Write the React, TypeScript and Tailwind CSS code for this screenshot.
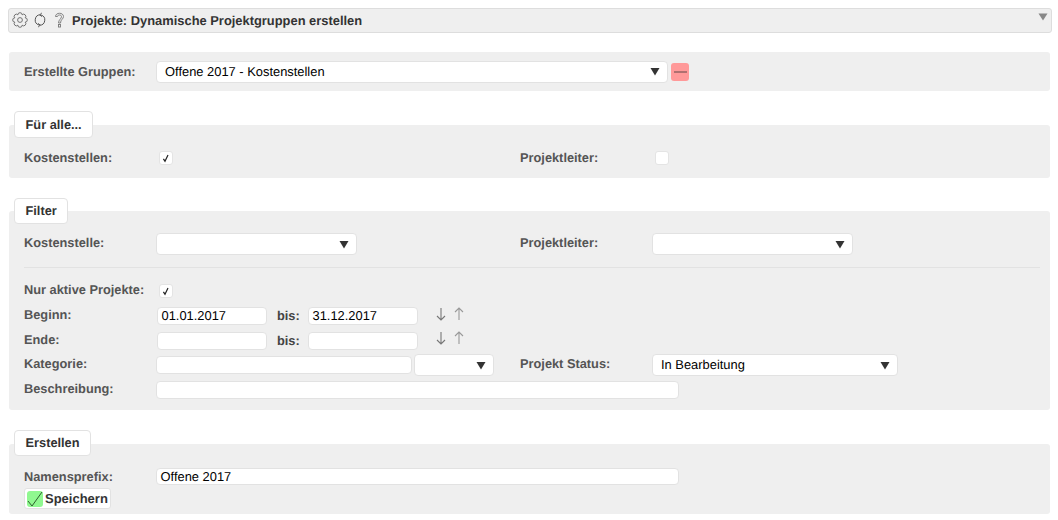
import React from "react";

const FONT = "[font-family:'Liberation_Sans',Arial,sans-serif] [text-rendering:geometricPrecision]";

function gearPath() {
  const cx = 12;
  const cy = 12;
  const r = 8.4;
  const n = 8;
  let d = "";
  for (let i = 0; i < n; i++) {
    const a = ((i * 360) / n + 22.5 - 90) * (Math.PI / 180);
    const x = (cx + r * Math.cos(a)).toFixed(2);
    const y = (cy + r * Math.sin(a)).toFixed(2);
    d += i === 0 ? `M${x} ${y}` : ` A2.4 2.4 0 0 1 ${x} ${y}`;
  }
  const a0 = (22.5 - 90) * (Math.PI / 180);
  d += ` A2.4 2.4 0 0 1 ${(cx + r * Math.cos(a0)).toFixed(2)} ${(cy + r * Math.sin(a0)).toFixed(2)}Z`;
  return d;
}

function Tri({ className = "" }: { className?: string }) {
  return (
    <svg width="10" height="9" viewBox="0 0 10 9" className={className}>
      <path d="M0.5 1 H9.5 L5 8.5 Z" fill="#333" />
    </svg>
  );
}

function Select({ w, value, h = "h-[22px]" }: { w: string; value?: string; h?: string }) {
  return (
    <div className={`${w} ${h} shrink-0 flex items-center justify-between bg-white border border-[#e2e2e2] rounded-[4px] pl-[8px] pr-[7px] text-[12.9px] text-black`}>
      <span>{value}</span>
      <Tri />
    </div>
  );
}

function Input({ w, value, h = "h-[18px]" }: { w: string; value?: string; h?: string }) {
  return (
    <div className={`${w} ${h} shrink-0 flex items-center bg-white border border-[#e2e2e2] rounded-[4px] pl-[3.5px] text-[12.9px] text-black leading-none`}>
      {value}
    </div>
  );
}

function Check({ checked }: { checked?: boolean }) {
  return (
    <div className="w-[14px] h-[14px] ml-[3px] shrink-0 bg-white border border-[#e4e4e4] rounded-[3px] flex items-center justify-center">
      {checked && (
        <svg width="10" height="10" viewBox="0 0 10 10">
          <path d="M2.4 5.8 L4 8.2 L7 2" fill="none" stroke="#222" strokeWidth="1.2" />
        </svg>
      )}
    </div>
  );
}

function Label({ children, w = "w-[132px]", up = true }: { children: React.ReactNode; w?: string; up?: boolean }) {
  return (
    <div className={`${w} shrink-0 text-[12.8px] font-bold text-[#555]`}>
      <span className={up ? "relative -top-[1px]" : ""}>{children}</span>
    </div>
  );
}

function Tab({ children, w, h, mb }: { children: React.ReactNode; w: string; h: string; mb: string }) {
  return (
    <div className={`${w} ${h} ${mb} relative z-10 ml-[6px] flex items-center pl-[10.5px] bg-white border border-[#e2e2e2] rounded-[4px] text-[12.8px] font-bold text-[#333]`}>
      {children}
    </div>
  );
}

function Arrow({ up }: { up?: boolean }) {
  return (
    <svg width="12" height="16" viewBox="0 0 12 16">
      <g stroke={up ? "#999" : "#777"} strokeWidth="1.1" fill="none">
        {up ? <path d="M6 14 V2 M2 6 L6 2 L10 6" /> : <path d="M6 2 V14 M2 10 L6 14 L10 10" />}
      </g>
    </svg>
  );
}

export default function App() {
  return (
    <div className={`${FONT} w-[1058px] h-[520px] overflow-hidden bg-white pt-[8px] pl-[8px]`}>
      {/* Title bar */}
      <div className="w-[1044px] h-[25px] relative flex items-center bg-[#efefef] border border-[#dddddd] rounded-[3px] pl-[3px]">
        <svg width="16" height="16" viewBox="0 0 24 24" fill="none" stroke="#555" strokeWidth="1.2" className="mr-[5px] -mt-[2px]">
          <path d={gearPath()} />
          <circle cx="12" cy="12" r="3.6" />
        </svg>
        <svg width="14" height="16" viewBox="0 0 14 16" fill="none" stroke="#555" strokeWidth="1" className="mr-[7px] -mt-[2px]">
          <path d="M7.5 2.8 A5.2 5.2 0 0 0 6 13 M6.5 13.2 A5.2 5.2 0 0 0 8 3" />
          <path d="M8.8 1 L6.8 2.8 L8.8 4.6 M5.2 11.4 L7.2 13.2 L5.2 15" />
        </svg>
        <svg width="11" height="16" viewBox="0 0 11 16" fill="none" stroke="#777" strokeWidth="0.9" className="mr-[7px] -mt-[2px]">
          <path d="M1.5 4.5 C1.5 0.2 9.5 0.2 9.5 4.5 C9.5 7 6.5 7.5 6.5 11 H4.5 C4.5 7.5 7.5 7 7.5 4.5 C7.5 2.5 3.5 2.5 3.5 4.5 Z" />
          <rect x="4.5" y="12.5" width="2" height="2.5" />
        </svg>
        <span className="text-[12.9px] font-bold text-[#333]">Projekte: Dynamische Projektgruppen erstellen</span>
        <svg width="10" height="8" viewBox="0 0 10 8" className="absolute right-[3px] top-[4px]">
          <path d="M0.5 0.5 H9.5 L5 7.5 Z" fill="#888" />
        </svg>
      </div>

      {/* Gruppen */}
      <div className="w-[1041px] ml-[1px] mt-[19px] h-[39px] flex items-center bg-[#efefef] rounded-[3px] pl-[15px]">
        <Label up={false}>Erstellte Gruppen:</Label>
        <Select w="w-[512px]" value="Offene 2017 - Kostenstellen" />
        <div className="ml-[3px] w-[18px] h-[18px] flex items-center justify-center bg-[#ff9999] rounded-[3px]">
          <div className="w-[13px] h-[2px] bg-[#b07070]" />
        </div>
      </div>

      {/* Für alle */}
      <div className="mt-[20px]">
        <Tab w="w-[79px]" h="h-[27px]" mb="-mb-[13px]">Für alle...</Tab>
        <div className="w-[1041px] ml-[1px] h-[53px] bg-[#efefef] rounded-[3px] pl-[15px] pt-[26px] flex items-start">
          <div className="w-[496px] flex">
            <div className="-mt-[2px]"><Label>Kostenstellen:</Label></div>
            <Check checked />
          </div>
          <div className="flex">
            <div className="-mt-[2px]"><Label>Projektleiter:</Label></div>
            <Check />
          </div>
        </div>
      </div>

      {/* Filter */}
      <div className="mt-[20px]">
        <Tab w="w-[54px]" h="h-[26px]" mb="-mb-[13px]">Filter</Tab>
        <div className="w-[1041px] ml-[1px] h-[199px] bg-[#efefef] rounded-[3px] pl-[15px] pr-[10px] pt-[22px]">
          <div className="flex items-center pb-[12px] border-b border-[#e2e2e2]">
            <div className="w-[496px] flex items-center">
              <Label>Kostenstelle:</Label>
              <Select w="w-[201px]" />
            </div>
            <div className="flex items-center">
              <Label>Projektleiter:</Label>
              <Select w="w-[201px]" />
            </div>
          </div>
          <div className="flex items-center mt-[16px] h-[14px]">
            <Label>Nur aktive Projekte:</Label>
            <Check checked />
          </div>
          <div className="flex items-center mt-[9px] h-[18px]">
            <Label>Beginn:</Label>
            <div className="ml-[1px]"><Input w="w-[110px]" value="01.01.2017" /></div>
            <div className="w-[41px] pl-[10px] text-[12.8px] font-bold text-[#444]">bis:</div>
            <Input w="w-[110px]" value="31.12.2017" />
            <div className="ml-[17px] flex gap-[6px] -mt-[5px]"><Arrow /><Arrow up /></div>
          </div>
          <div className="flex items-center mt-[7px] h-[18px]">
            <Label>Ende:</Label>
            <div className="ml-[1px]"><Input w="w-[110px]" /></div>
            <div className="w-[41px] pl-[10px] text-[12.8px] font-bold text-[#444]">bis:</div>
            <Input w="w-[110px]" />
            <div className="ml-[17px] flex gap-[6px] -mt-[7px]"><Arrow /><Arrow up /></div>
          </div>
          <div className="flex items-center mt-[4px] h-[22px]">
            <Label>Kategorie:</Label>
            <Input w="w-[256px]" />
            <div className="ml-[2px]"><Select w="w-[80px]" /></div>
            <div className="w-[26px]" />
            <Label>Projekt Status:</Label>
            <Select w="w-[246px]" value="In Bearbeitung" />
          </div>
          <div className="flex items-center mt-[5px] h-[18px]">
            <Label>Beschreibung:</Label>
            <Input w="w-[523px]" />
          </div>
        </div>
      </div>

      {/* Erstellen */}
      <div className="mt-[20px]">
        <Tab w="w-[77px]" h="h-[26px]" mb="-mb-[12px]">Erstellen</Tab>
        <div className="w-[1041px] ml-[1px] h-[70px] bg-[#efefef] rounded-[3px] pl-[15px] pt-[24px]">
          <div className="flex items-center h-[17px]">
            <Label up={false}>Namensprefix:</Label>
            <Input w="w-[523px]" h="h-[17px] pt-[1px]" value="Offene 2017" />
          </div>
          <div className="mt-[3px] w-[87px] h-[21px] flex items-center bg-white border border-[#e2e2e2] rounded-[3px] pl-[2px] text-[13px] font-bold text-[#333]">
            <div className="w-[16px] h-[16px] mr-[2px] bg-[#90f890] rounded-[3px] flex items-center justify-center">
              <svg width="16" height="16" viewBox="0 0 16 16" fill="none" stroke="#2f5f2f" strokeWidth="1">
                <path d="M1 10 L5 15 L15 1" />
              </svg>
            </div>
            <span>Speichern</span>
          </div>
        </div>
      </div>
    </div>
  );
}
